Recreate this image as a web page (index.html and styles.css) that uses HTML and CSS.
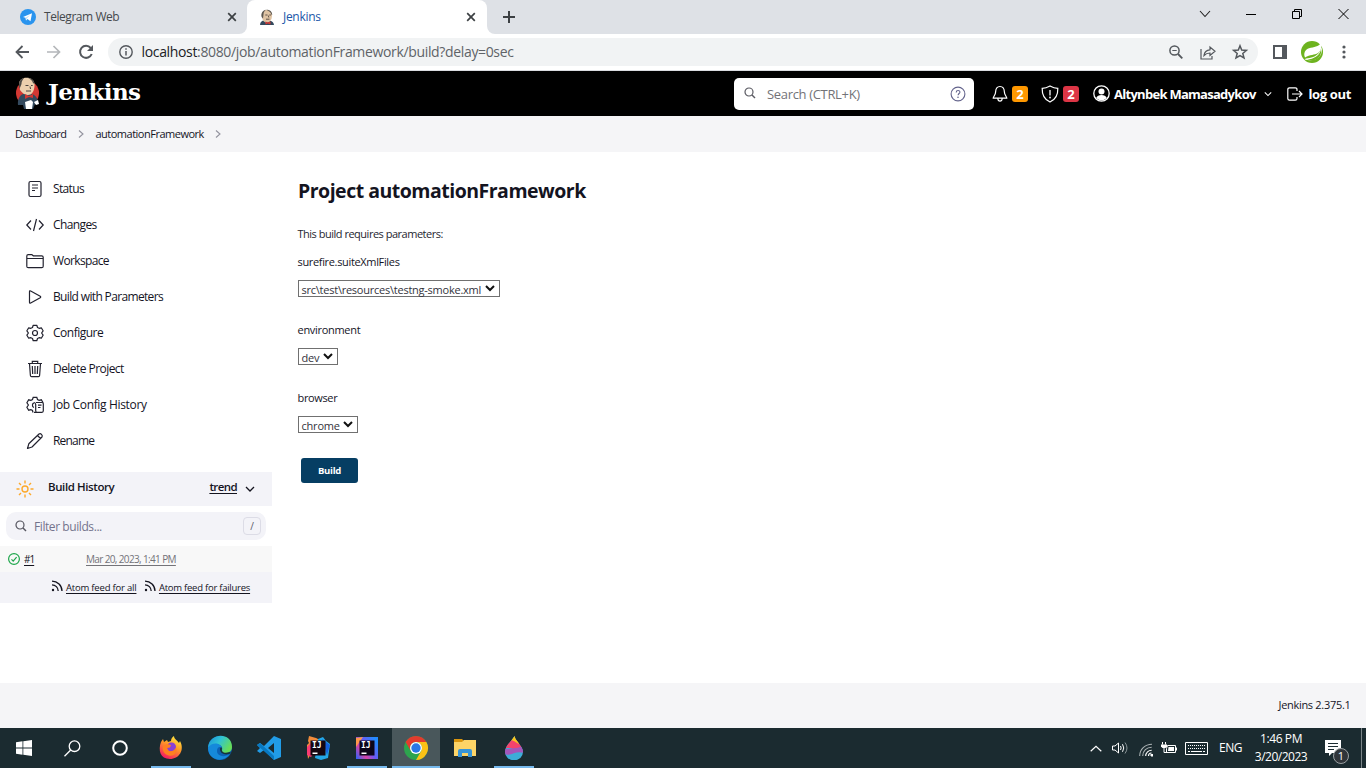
FILE: index.html
```html
<!DOCTYPE html>
<html lang="en">
<head>
<meta charset="utf-8">
<title>Jenkins</title>
<link rel="stylesheet" href="styles.css">
</head>
<body>
<svg class="defs" width="0" height="0">
  <symbol id="jenkins-head" viewBox="0 0 16 16">
    <path d="M1 15.500c0-3 2-4.300 4-4.500l6 .2c2.500.6 3.800 2 4 4.300z" fill="#33495d"/>
    <path d="M4 11 2.600 6C2.400 2.500 5 .4 8 .5s5.300 2 5 6-1.800 6-4 6.500S5 12.400 4 11z" fill="#dfc3a3"/>
    <path d="M2.600 7.500C1.800 3.500 4 .7 7 .3 4.800 2 4.500 3.700 4.500 5L4 9zM7 .3c4-.3 6.200 2 6.200 5.200l-.9-.5C12 3 10 1.500 7 .3z" fill="#5b5752"/>
    <path d="M6.300 5.500h2.200M10.300 5.500h1.700M9.300 6l.5 2M7 9.700h3.500" stroke="#554840" stroke-width=".9" fill="none"/>
    <path d="m6.500 12 2.300 1 2.700-1v3l-2.700-1-2.300 1z" fill="#d33833"/>
  </symbol>
  <symbol id="feed" viewBox="0 0 12 12"><path d="M1 1.200c5.500 0 10 4.300 10 9.800M1 4.800c3.500 0 6.200 2.700 6.200 6.200" fill="none" stroke="#14141f" stroke-width="1.300"/><circle cx="2" cy="10" r="1.200" fill="#14141f"/></symbol>
  <symbol id="chev" viewBox="0 0 10 6"><path d="m1 1 4 4 4-4" fill="none" stroke="currentColor" stroke-width="1.300"/></symbol>
  <symbol id="lens" viewBox="0 0 12 12"><circle cx="5" cy="5" r="4" fill="none" stroke="currentColor" stroke-width="1.200"/><path d="m8 8 3 3" stroke="currentColor" stroke-width="1.400"/></symbol>
  <symbol id="close" viewBox="0 0 10 10"><path d="m1.200 1.200 7.600 7.600m0-7.600L1.200 8.800" stroke="#3c4043" stroke-width="1.700"/></symbol>
</svg>

<header class="tabs">
  <div class="tab">
    <svg width="16" height="16" viewBox="0 0 16 16"><circle cx="8" cy="8" r="8" fill="#2a94ee"/><path d="m3 8 9-3.700-1.500 8-3-2.200L6 11.400l-.5-2.600z" fill="#fff"/><path d="m5.700 8.800 4.300-2.700-3.300 3.300L6 11.400z" fill="#b6dcfa"/></svg>
    <span class="t-telegram">Telegram Web</span>
    <svg class="x" width="10" height="10"><use href="#close"/></svg>
  </div>
  <div class="tab active">
    <svg width="16" height="17"><use href="#jenkins-head"/></svg>
    <span class="t-jenkins">Jenkins</span>
    <svg class="x" width="10" height="10"><use href="#close"/></svg>
  </div>
  <div class="strip">
    <svg width="12" height="12" viewBox="0 0 12 12"><path d="M6 0v12M0 6h12" stroke="#3c4043" stroke-width="2"/></svg>
    <div class="window">
      <svg width="12" height="12" viewBox="0 0 12 12"><path d="m1 3 5 5.500L11 3" fill="none" stroke="#222" stroke-width="1.100"/></svg>
      <svg width="10" height="12" viewBox="0 0 10 12"><path d="M0 6.500h10" stroke="#000"/></svg>
      <svg width="10" height="12" viewBox="0 0 10 12"><path d="M.5 3.500h7v7h-7zM2.500 3.500v-2h7v7h-2" fill="none" stroke="#000"/></svg>
      <svg width="11" height="12" viewBox="0 0 11 12"><path d="m.5 1 10 10m0-10-10 10" stroke="#000"/></svg>
    </div>
  </div>
</header>

<nav class="toolbar">
  <svg width="14" height="14" viewBox="0 0 14 14"><path d="M14 7H1.500M7.500 1l-6 6 6 6" fill="none" stroke="#54585d" stroke-width="1.800"/></svg>
  <svg width="14" height="14" viewBox="0 0 14 14"><path d="M0 7h12.500M6.500 1l6 6-6 6" fill="none" stroke="#b4b7ba" stroke-width="1.700"/></svg>
  <svg width="14" height="14" viewBox="0 0 14 14"><path d="M11.700 3A6 6 0 1 0 12.700 9" fill="none" stroke="#54585d" stroke-width="2"/><path d="M14 0v6H8z" fill="#54585d"/></svg>
  <div class="address">
    <svg width="14" height="14" viewBox="0 0 14 14"><circle cx="7" cy="7" r="6.200" fill="none" stroke="#54585d" stroke-width="1.400"/><path d="M7 6v4.500M7 3.300v1.500" stroke="#54585d" stroke-width="1.500"/></svg>
    <span class="url"><b>localhost</b>:8080/job/automationFramework/build?delay=0sec</span>
    <svg width="14" height="14" viewBox="0 0 14 14"><circle cx="5.500" cy="5.500" r="4.600" fill="none" stroke="#54585d" stroke-width="1.500"/><path d="m9 9 4.300 4.300" stroke="#54585d" stroke-width="1.800"/><path d="M3.300 5.500h4.400" stroke="#54585d"/></svg>
    <svg width="16" height="15" viewBox="0 0 16 15"><path d="M1 4v10h11v-3" fill="none" stroke="#54585d" stroke-width="1.200"/><path d="M4 10.500c.4-3.300 2.300-5.500 6-5.700V2l5 4.300-5 4.200V8c-2.500 0-4.300.7-6 2.500z" fill="none" stroke="#54585d" stroke-width="1.200"/></svg>
    <svg width="16" height="16" viewBox="0 0 16 16"><path d="m8 1.700 1.700 4.300 4.700.4-3.600 3 1.200 4.500L8 11.500l-4 2.400 1.200-4.500-3.600-3L6.300 6z" fill="none" stroke="#54585d" stroke-width="1.500"/></svg>
  </div>
  <svg class="panel" width="14" height="14" viewBox="0 0 14 14"><path d="M0 0h14v14H0zM2 2v10h7V2z" fill="#54585d" fill-rule="evenodd"/></svg>
  <svg class="leaf" width="22" height="22" viewBox="0 0 22 22"><circle cx="11" cy="11" r="11" fill="#6db31f"/><path d="M20 2c1 5-.3 8-3 10-3.500 2.300-8 1.300-13 4.500C2 12 4.500 8.500 8 7.300 13 5.800 17.500 6 20 2z" fill="#fff"/><path d="M20.500 6C19 12 15 17 5 17.400l-1.500 1.200C10 20 16 19 19 15c2-3 2.300-6 1.500-9z" fill="#fff"/><path d="M20 9c-2 6-7 9-14 9.500 6 1.800 10 .5 12.500-3C20 13 20.500 11 20 9z" fill="#6db31f"/></svg>
  <svg class="kebab" width="4" height="14" viewBox="0 0 4 14" fill="#54585d"><circle cx="2" cy="2" r="1.600"/><circle cx="2" cy="7" r="1.600"/><circle cx="2" cy="12" r="1.600"/></svg>
</nav>

<header class="jheader">
  <div class="brand">
    <svg width="25" height="33" viewBox="0 0 25 33"><ellipse cx="12.500" cy="16" rx="11.500" ry="12" fill="#d33833"/><path d="M3 28c-.5-5 1-9 5-11l8-.3c4 1 7 3.500 7 10l-3 .3-2 5H9l-1-4z" fill="#33495d"/><path d="M5 13 4 7C4 3 7 .7 11.500.7S20 3 19.500 9s-3 9-6.500 9c-3 0-6-2-8-5z" fill="#eccfae"/><path d="M4.500 12C3 5 5.500 1.500 9 1 7 3.500 6.500 5 6.500 7zM13 1c4 0 6.500 3 6.400 6L18 6c-1-3-3-4-5-5z" fill="#4c4945"/><path d="M10.500 8.500h3m2.500 0h1.700M15 9.500l.5 2.500M11 14h5" stroke="#4c4541" fill="none"/><path d="m10 17 4 2 4-2v4l-4-1-4 2z" fill="#d33833"/><path d="m10 25 6-2 2 2-1 7h-6zM19 25l4-2 1 4-3 1z" fill="#fff"/></svg>
    <span class="wordmark">Jenkins</span>
  </div>
  <div class="search">
    <svg width="12" height="12"><use href="#lens"/></svg>
    <span class="t-search">Search (CTRL+K)</span>
    <svg width="16" height="16" viewBox="0 0 16 16"><circle cx="8" cy="8" r="6.900" fill="none" stroke="#64648c" stroke-width="1.100"/><path d="M6.200 6.400c0-2.600 3.800-2.400 3.700-.2 0 1.300-1.800 1.400-1.800 3" fill="none" stroke="#64648c" stroke-width="1.100"/><circle cx="8" cy="11.200" r=".8" fill="#64648c"/></svg>
  </div>
  <div class="alerts">
    <svg width="16" height="18" viewBox="0 0 16 18"><path d="M8 1.500C5 1.500 3.700 4 3.600 7c0 3-2.400 4.500-2.400 6.200h13.600c0-1.700-2.400-3.200-2.400-6.200C12.300 4 11 1.500 8 1.500zM5.800 13.500c.3 3.500 4.100 3.500 4.400 0" fill="none" stroke="#fff" stroke-width="1.200"/></svg>
    <span class="badge orange">2</span>
  </div>
  <div class="alerts shield">
    <svg width="18" height="18" viewBox="0 0 18 18"><path d="M9 1Q5 3.400 1.200 3.400C1 9 2.500 14 9 17c6.500-3 8-8 7.800-13.600Q13 3.400 9 1z" fill="none" stroke="#fff" stroke-width="1.200"/><path d="M9 5v5.500" stroke="#fff" stroke-width="1.300"/><circle cx="9" cy="12.500" r=".9" fill="#fff"/></svg>
    <span class="badge red">2</span>
  </div>
  <div class="user">
    <svg width="17" height="17" viewBox="0 0 17 17"><circle cx="8.500" cy="8.500" r="7.700" fill="none" stroke="#fff" stroke-width="1.300"/><circle cx="8.500" cy="6.500" r="3" fill="#fff"/><path d="M3.200 13c1.200-4 9.400-4 10.600 0-3 3.200-7.600 3.200-10.600 0z" fill="#fff"/></svg>
    <span class="t-user">Altynbek Mamasadykov</span>
    <svg width="8" height="6"><use href="#chev"/></svg>
  </div>
  <div class="logout">
    <svg width="16" height="14" viewBox="0 0 16 14"><path d="M10 4V2.500Q10 .8 8.300.8H2.500Q.8.800.8 2.500v9q0 1.700 1.700 1.700h5.800q1.700 0 1.700-1.700V10M5 7h10M12 4l3 3-3 3" fill="none" stroke="#fff" stroke-width="1.200"/></svg>
    <span class="t-logout">log out</span>
  </div>
</header>

<nav class="crumbs">
  <span class="t-dash">Dashboard</span>
  <svg width="6" height="8" viewBox="0 0 6 8"><path d="m1 .5 4 3.500-4 3.500" fill="none" stroke="#92929e" stroke-width="1.100"/></svg>
  <span class="t-auto">automationFramework</span>
  <svg width="6" height="8" viewBox="0 0 6 8"><path d="m1 .5 4 3.500-4 3.500" fill="none" stroke="#92929e" stroke-width="1.100"/></svg>
</nav>

<div class="page">
  <aside class="side">
    <ul class="tasks">
      <li><svg viewBox="0 0 18 18"><rect x="3" y="1.500" width="12" height="15" rx="1.500"/><path d="M6 5h6M6 8h6M6 10.500h3"/></svg><span class="m1">Status</span></li>
      <li><svg viewBox="0 0 18 18"><path d="M5 4.500.8 9 5 13.500M13 4.500 17.200 9 13 13.500M10.500 3l-3 12"/></svg><span class="m2">Changes</span></li>
      <li><svg viewBox="0 0 18 18"><path d="M.8 6.500V4Q.8 2.600 2.200 2.600h3.600l1.500 1.200h8.400q1.500 0 1.500 1.400v9q0 1.500-1.500 1.500H2.300q-1.500 0-1.500-1.500zm0 0h16.400"/></svg><span class="m3">Workspace</span></li>
      <li><svg viewBox="0 0 18 18"><path d="M3.500 3.700v10.600q0 1.300 1.200.7l9.500-5.300q1-.7 0-1.400L4.700 3Q3.500 2.400 3.500 3.700z"/></svg><span class="m4">Build with Parameters</span></li>
      <li><svg viewBox="0 0 18 18"><path d="M7.200 1.300h3.600l.7 2.200 1.600.8 2.200-.5 1.800 3L15.600 9l1.500 2.200-1.800 3-2.200-.5-1.600.8-.7 2.200H7.200l-.7-2.200-1.600-.8-2.200.5-1.800-3L2.400 9 .9 6.800l1.800-3 2.200.5 1.600-.8z" stroke-linejoin="round"/><circle cx="9" cy="9" r="2.500"/></svg><span class="m5">Configure</span></li>
      <li><svg viewBox="0 0 18 18"><path d="M3.500 3.500 4.400 15.500q.1 1.200 1.200 1.200h6.800q1.100 0 1.200-1.200l.9-12M2 3.500h14M6.300 3.300v-2h5.400v2M9 6v8M6.300 6l.4 8M11.700 6l-.4 8"/></svg><span class="m6">Delete Project</span></li>
      <li><svg viewBox="0 0 18 18"><path d="M7 16.500 6.500 14.500l-1.600-.8-2.200.5-1.800-3L2.400 9 .9 6.800l1.800-3 2.200.5 1.600-.8.700-2.200h3.600l.7 2.200 1.600.8 2.200-.5 1.800 3M8 11.500C5.700 11 6 7 8.300 6.800"/><path d="M10 6.500h6q1.300 0 1.300 1.300v7q0 1.500-1.300 1.500h-5q-1.300 0-1.300-1.500V8.500Q9.500 6.500 8 6.500M12 9.200h3.500M12 11.500h2.500M8 16.400h3"/></svg><span class="m7">Job Config History</span></li>
      <li><svg viewBox="0 0 18 18"><path d="m1.500 16.500 1.300-4.700L13 2q1.200-1 2.500.3T16 5L6 15zM11.500 3.500l3 3" stroke-linejoin="round"/></svg><span class="m8">Rename</span></li>
    </ul>
    <section class="history">
      <div class="hist-head">
        <svg width="18" height="18" viewBox="0 0 18 18" fill="none" stroke="#fda92b" stroke-width="1.400"><circle cx="9" cy="9" r="3"/><path d="M9 .5v3M9 14.500v3M.5 9h3M14.500 9h3M3 3l2 2M13 13l2 2M3 15l2-2M13 5l2-2"/></svg>
        <span class="t-bh">Build History</span>
        <a class="t-trend">trend</a>
        <svg width="10" height="6"><use href="#chev"/></svg>
      </div>
      <div class="filter">
        <svg width="12" height="12"><use href="#lens"/></svg>
        <span class="t-filter">Filter builds...</span>
        <kbd>/</kbd>
      </div>
      <div class="build">
        <svg width="12" height="12" viewBox="0 0 12 12" fill="none" stroke="#1ea64b" stroke-width="1.200"><circle cx="6" cy="6" r="5.400"/><path d="m3.500 6.300 1.700 1.800 3.400-4"/></svg>
        <div class="num"><a class="t-num">#1</a></div>
        <a class="t-date">Mar 20, 2023, 1:41 PM</a>
      </div>
      <div class="feeds">
        <svg width="12" height="12"><use href="#feed"/></svg><a class="t-f1">Atom feed for all</a>
        <svg class="second" width="12" height="12"><use href="#feed"/></svg><a class="t-f2">Atom feed for failures</a>
      </div>
    </section>
  </aside>
  <main class="main">
    <h1><span class="t-h1">Project automationFramework</span></h1>
    <p class="lead"><span class="t-lead">This build requires parameters:</span></p>
    <div class="param"><span class="label l1">surefire.suiteXmlFiles</span>
      <div class="select s1"><span class="o1">src\test\resources\testng-smoke.xml</span><svg width="10" height="7" viewBox="0 0 10 7"><path d="m1 1 4 4 4-4" fill="none" stroke="#111" stroke-width="2"/></svg></div></div>
    <div class="param"><span class="label l2">environment</span>
      <div class="select s2"><span class="o2">dev</span><svg width="10" height="7" viewBox="0 0 10 7"><path d="m1 1 4 4 4-4" fill="none" stroke="#111" stroke-width="2"/></svg></div></div>
    <div class="param"><span class="label l3">browser</span>
      <div class="select s3"><span class="o3">chrome</span><svg width="10" height="7" viewBox="0 0 10 7"><path d="m1 1 4 4 4-4" fill="none" stroke="#111" stroke-width="2"/></svg></div></div>
    <button class="go"><span>Build</span></button>
  </main>
</div>

<footer class="foot"><span class="t-ver">Jenkins 2.375.1</span></footer>

<footer class="taskbar">
  <div class="app"><svg width="16" height="16" viewBox="0 0 16 16" fill="#fff"><path d="m0 2.200 6.500-.9v6.300H0zM7.300 1.200 16 0v7.600H7.300zM0 8.400h6.500v6.300L0 13.800zM7.300 8.400H16V16l-8.700-1.200z"/></svg></div>
  <div class="app"><svg width="17" height="17" viewBox="0 0 17 17" fill="none" stroke="#fff" stroke-width="1.300"><circle cx="10.500" cy="6.200" r="5.300"/><path d="M6.700 10 .5 16.200"/></svg></div>
  <div class="app"><svg width="16" height="16" viewBox="0 0 16 16"><circle cx="8" cy="8" r="6.800" fill="none" stroke="#fff" stroke-width="2"/></svg></div>
  <div class="app open"><svg width="24" height="24" viewBox="0 0 24 24"><defs><linearGradient id="ff" x1=".8" y1="0" x2=".3" y2="1"><stop stop-color="#fff044"/><stop offset=".45" stop-color="#ff9727"/><stop offset="1" stop-color="#f61862"/></linearGradient></defs><path d="M2 6 4 3l1 3 3-2 1 2 3-1c0-2 1-4 3-5 0 3 3 4 5 7l1-2c5 9-1 18-10 18C1 23-1 14 2 6z" fill="url(#ff)"/><circle cx="12.500" cy="11" r="4.500" fill="#8a3fd5"/><path d="m4 10 4-2 4 1-1 2.500-3 .5c1 5 7 4 9-.5 2 6-3 9-7 8-5-1-7-5-6-9.500z" fill="#ff8020"/></svg></div>
  <div class="app"><svg width="24" height="24" viewBox="0 0 24 24"><defs><linearGradient id="ed" x1="0" y1="0" x2="1" y2=".5"><stop stop-color="#198ddb"/><stop offset=".5" stop-color="#30c3d4"/><stop offset="1" stop-color="#67de58"/></linearGradient></defs><circle cx="12" cy="12" r="12" fill="#0c61b4"/><path d="M0 12C1-4 24-4 24 11c0 4-3 6-7 6-3 0-4-1-3-3 2-5-7-9-14-2z" fill="url(#ed)"/><path d="M0 12c4-7 13-5 14 0-2-2-5-1-5 3 0 5 7 7 13 3-7 10-22 6-22-6z" fill="#1589db"/><path d="M12 13c0-1 1-2 2-1-1 4 2 6 8 4l1 1c-5 3-11 1-11-4z" fill="#17343b"/></svg></div>
  <div class="app"><svg width="24" height="24" viewBox="0 0 24 24"><path d="m17 0 7 3v18l-7 3L7 14l-4 3-3-2 3-3-3-3 3-2 4 3zm0 7-6 5 6 5z" fill="#219ce7" fill-rule="evenodd"/><path d="m0 9 3-2 14 13v4z" fill="#0879c2"/></svg></div>
  <div class="app"><svg width="24" height="24" viewBox="0 0 24 24"><path d="m3 0 7 2 6 3-8 7-6 11-1-9L1 9l2-2-1-2z" fill="#f28c3c"/><path d="m1 11 7-7 5 6-8 11-4-2z" fill="#fa3b73"/><path d="m12 3 5-2 3 4 4 3-2 14-7 2-6-2z" fill="#23a7e7"/><path d="m16 3 5 16 3-10z" fill="#1560dd"/><path d="M4.500 4.500h15v15h-15z" fill="#150711"/><path d="M6.500 16.500h5v1.500h-5z" fill="#fff"/><text x="6" y="12" class="ij">IJ</text></svg></div>
  <div class="app open"><svg width="24" height="24" viewBox="0 0 24 24"><defs><linearGradient id="ij" x1="0" y1="1" x2="1" y2=".3"><stop stop-color="#2464ff"/><stop offset=".35" stop-color="#d943a5"/><stop offset=".6" stop-color="#6b58f2"/><stop offset="1" stop-color="#238bff"/></linearGradient></defs><path d="M1 1h22v22H1z" fill="url(#ij)"/><path d="m1 2 7-1-7 10z" fill="#ff974b"/><path d="M4.500 4.500h15v15h-15z" fill="#0b061a"/><path d="M6.500 16.500h5v1.500h-5z" fill="#fff"/><text x="6" y="12" class="ij">IJ</text></svg></div>
  <div class="app open current"><svg width="24" height="24" viewBox="0 0 24 24"><circle cx="12" cy="12" r="12" fill="#2da44e"/><path d="M1.600 6A12 12 0 0 1 22.400 6H12a6 6 0 0 0-5.200 9z" fill="#e33b2e"/><path d="M22.400 6A12 12 0 0 1 12 24l5.200-9A6 6 0 0 0 12 6z" fill="#fbc116"/><circle cx="12" cy="12" r="6" fill="#fff"/><circle cx="12" cy="12" r="4.700" fill="#2878e8"/></svg></div>
  <div class="app"><svg width="24" height="24" viewBox="0 0 24 24"><path d="M1 3h8l2 2h12v4H1z" fill="#db960e"/><path d="M1 6h8l2-2h12v16H1z" fill="#fdd467"/><path d="M5 21v-6q0-2 2-2h10q2 0 2 2v6h-4v-4H9v4z" fill="#3895d7"/></svg></div>
  <div class="app open"><svg width="24" height="24" viewBox="0 0 24 24"><defs><clipPath id="drop"><path d="M12.500 0C14 6 21 10 21 16a9 8.500 0 0 1-18 0C3 10 9 6 12.500 0z"/></clipPath></defs><g clip-path="url(#drop)"><path d="M0 0h24v24H0z" fill="#3dadd8"/><path d="M0 11c9 6 11-3 24 0v7C13 13 12 21 0 18z" fill="#a456ba"/><path d="M0 14C7 9 12 16 24 8V4H0z" fill="#f3436c"/><path d="m8 4 5-5 6 9c-5 0-6-4-11-4z" fill="#fbc51c"/></g></svg></div>
  <div class="tray">
    <svg width="12" height="7" viewBox="0 0 12 7"><path d="m.7 6.300 5.300-5 5.300 5" fill="none" stroke="#fff" stroke-width="1.200"/></svg>
    <svg class="vol" width="16" height="14" viewBox="0 0 16 14" fill="none" stroke="#fff"><path d="M.5 5v4H3l3.500 3V2L3 5zM8.500 5q1.300 2 0 4M10.500 3.200q2.500 3.800 0 7.600"/><path d="M13 1.500q4 5.500 0 11" stroke="#8b9699"/></svg>
    <svg class="wifi" width="14" height="14" viewBox="0 0 14 14" fill="none" stroke="#aab1b3" stroke-width="1.100"><path d="M.7 13C.7 6.500 6 1.300 13 1.300M3.700 13c0-5 4-8.800 9-8.800"/><path d="M6.700 13c0-3.500 2.800-5.800 6-5.800M9.500 13c0-1.700 1.300-3 3-3" stroke="#fff"/><path d="M11.500 12h1.500v1.500" stroke="#fff" stroke-width="2"/></svg>
    <svg class="bat" width="16" height="12" viewBox="0 0 16 12"><path d="M6.500 3.500h8v7h-9v-4z" fill="none" stroke="#fff"/><path d="M7.500 5h5.500v4H7z" fill="#fff"/><path d="M15.500 5.500v3M1.500 0v2.500M4.500 0v2.500M3 6v4.500h3" stroke="#fff" fill="none"/><path d="M0 2.500h6v2L4.500 6h-3L0 4.500z" fill="#fff"/></svg>
    <svg class="kb" width="23" height="13" viewBox="0 0 23 13"><path d="M.5.5h22v12H.5z" fill="none" stroke="#fff"/><path d="M3 3.500h17M3 6.500h17" stroke="#fff" stroke-dasharray="1 1"/><path d="M3 9.500h2M6 9.500h11M18 9.500h2" stroke="#fff"/></svg>
    <span class="t-eng">ENG</span>
    <div class="clock"><span class="t-time">1:46 PM</span><span class="t-day">3/20/2023</span></div>
    <div class="notif"><svg width="16" height="17" viewBox="0 0 16 17"><path d="M0 0h16v13H7l-3 3v-3H0z" fill="#fff"/><path d="M3 3.500h10M3 6.500h10M3 9.500h6" stroke="#1d2d32"/></svg><span>1</span></div>
    <i class="peek"></i>
  </div>
</footer>
</body>
</html>
```

FILE: styles.css
```css
* { box-sizing: border-box; }
body { margin: 0; width: 1366px; height: 768px; overflow: hidden; display: flex; flex-direction: column; background: #fff; color: #14141f; font: 12px/16px "Open Sans", "Noto Sans", sans-serif; }
svg { display: block; flex: none; overflow: visible; }
.defs { position: absolute; }
span, a { white-space: nowrap; }
a { text-decoration: underline; text-underline-offset: 2px; }

.tabs { height: 34px; flex: none; display: flex; background: linear-gradient(#dee1e6 0 17px, #fff 17px); color: #45494d; }
.tab { width: 247px; background: #dee1e6; display: flex; align-items: center; padding: 0 10px 0 20px; gap: 8px; border-bottom-right-radius: 8px; }
.tab .x { margin-left: auto; }
.tab.active { width: 240px; background: #fff; border-radius: 8px 8px 0 0; padding: 0 11px 0 12px; }
.t-telegram { letter-spacing: -.45px; }
.t-jenkins { color: #1a56a8; letter-spacing: -.3px; }
.strip { flex: 1; background: #dee1e6; border-bottom-left-radius: 8px; display: flex; align-items: center; padding: 0 17px 0 16px; }
.window { margin-left: auto; display: flex; gap: 36px; padding-bottom: 6px; }
.window svg:first-child { margin-right: -1px; }

.toolbar { height: 37px; flex: none; display: flex; align-items: center; padding: 0 20px 0 15px; border-bottom: 1px solid #dadce0; }
.toolbar > svg + svg { margin-left: 18px; }
.address { flex: none; margin-left: 15px; width: 1150px; height: 28px; border-radius: 14px; background: #f1f3f4; display: flex; align-items: center; padding: 0 10px 0 11px; gap: 16.500px; }
.url { flex: 1; margin-left: -8px; font-size: 14px; color: #5f6368; letter-spacing: -.345px; }
.url b { font-weight: 400; color: #202124; }
.toolbar .panel { margin-left: 15px; }
.toolbar .leaf { margin-left: 14px; }
.toolbar .kebab { margin-left: 19px; }

.jheader { height: 45px; flex: none; background: #000; color: #fff; display: flex; align-items: center; padding: 0 15px; font-size: 13px; font-weight: 700; }
.brand { flex: none; display: flex; align-items: center; gap: 8px; width: 719px; }
.wordmark { font: 700 23px/26px "DejaVu Serif", serif; padding-bottom: 3px; letter-spacing: -.6px; }
.search { flex: none; width: 240px; height: 32px; border-radius: 5px; background: #fff; color: #5a5a62; display: flex; align-items: center; padding: 0 8px 0 10px; gap: 11px; font-weight: 400; }
.search > svg:first-child { margin-bottom: 1px; }
.t-search { flex: 1; color: #737378; letter-spacing: -.33px; }
.alerts { display: flex; align-items: center; gap: 4px; margin-left: 18px; }
.shield { margin-left: 13px; gap: 4px; }
.badge { width: 16px; height: 16px; border-radius: 3px; text-align: center; font-size: 13px; line-height: 16px; }
.orange { background: #ff9800; }
.red { background: #dc3545; }
.user { display: flex; align-items: center; gap: 4px; margin-left: 14px; }
.t-user { letter-spacing: -.72px; }
.user > svg:last-child { margin-left: 4px; }
.logout { display: flex; align-items: center; gap: 5px; margin-left: auto; }
.t-logout { letter-spacing: -.35px; }

.crumbs { height: 36px; flex: none; background: #f5f5f7; display: flex; align-items: center; padding-left: 15px; gap: 11.500px; font-size: 11px; }
.t-dash { letter-spacing: -.6px; }
.t-auto { letter-spacing: -.49px; }

.page { flex: 1; display: flex; min-height: 0; }
.side { width: 272px; }
.tasks { list-style: none; margin: 0; padding: 19px 0 13px 26px; }
.tasks li { height: 36px; display: flex; align-items: center; gap: 9px; }
.tasks svg { width: 18px; height: 18px; fill: none; stroke: #22222f; stroke-width: 1.2; }
.m1 { letter-spacing: -.65px; } .m2 { letter-spacing: -.6px; } .m3 { letter-spacing: -.65px; } .m4 { letter-spacing: -.65px; }
.m5 { letter-spacing: -.5px; } .m6 { letter-spacing: -.55px; } .m7 { letter-spacing: -.34px; } .m8 { letter-spacing: -.8px; }
.hist-head { height: 34px; background: #f3f3f8; display: flex; align-items: center; padding: 0 17px 0 16px; font-weight: 600; font-size: 11.500px; }
.t-bh { margin-left: 14px; padding-bottom: 4px; letter-spacing: -.4px; }
.t-trend { margin-left: auto; margin-right: 8px; padding-bottom: 4px; letter-spacing: -.6px; }
.filter { height: 28px; margin: 6px 6px 6px; border-radius: 10px; background: #f3f3f8; display: flex; align-items: center; padding: 0 5px 0 9px; gap: 7px; color: #55555f; }
.t-filter { flex: 1; color: #73738c; padding-top: 2px; font-weight: 500; letter-spacing: -.42px; }
kbd { width: 18px; height: 18px; border: 1px solid #dcdce6; border-radius: 4px; text-align: center; font: 10px/16px "Open Sans", sans-serif; color: #5a5a68; }
.build { height: 26px; background: #f8f8f8; display: flex; align-items: center; padding-left: 8px; gap: 4px; font-size: 10px; }
.num { width: 58px; }
.t-num { letter-spacing: -1px; }
.t-date { color: #737378; letter-spacing: -.64px; }
.feeds { height: 31px; background: #f3f3f8; display: flex; align-items: center; padding-left: 51px; gap: 3px; font-size: 9.500px; }
.t-f1 { letter-spacing: -.2px; } .t-f2 { letter-spacing: -.25px; }
.feeds svg { margin-bottom: 4px; }
.feeds .second { margin-left: 4.500px; }

.main { padding: 24px 0 0 26px; font-size: 11px; display: flex; flex-direction: column; align-items: flex-start; }
h1 { margin: 0; font-size: 19.500px; line-height: 30px; font-weight: 700; letter-spacing: -.5px; }
.lead { margin: 20px 0 12px; color: #262630; letter-spacing: -.49px; }
.label, .lead { margin-left: -.5px; }
.l1 { letter-spacing: -.34px; } .l2 { letter-spacing: -.3px; } .l3 { letter-spacing: -.35px; }
.param { height: 68px; display: flex; flex-direction: column; align-items: flex-start; }
.select { margin-top: 10px; height: 17px; border: 1px solid #707070; display: flex; align-items: center; justify-content: space-between; padding: 0 4px 0 3px; line-height: 15px; color: #33333c; }
.select span { padding-top: 1px; margin-left: -.5px; }
.o1 { letter-spacing: -.24px; } .o2, .o3 { letter-spacing: -.2px; }
.s1 { width: 202px; } .s2 { width: 40px; } .s3 { width: 60px; }
.go { margin: 0 0 0 3px; width: 57px; height: 25px; border: 0; border-radius: 3px; background: #063e63; color: #fff; font: 700 9.500px/16px "Open Sans", sans-serif; letter-spacing: -.25px; padding: 0; }

.foot { height: 45px; flex: none; background: #f5f5f7; display: flex; align-items: center; justify-content: flex-end; padding: 0 15.500px 2px 0; font-size: 11px; letter-spacing: -.3px; }

.taskbar { height: 40px; flex: none; display: flex; background: #1b2b30; color: #fff; }
.app { width: 48px; height: 40px; display: flex; align-items: center; justify-content: center; }
.app + .app { margin-left: 1px; }
.app:nth-child(2), .app:nth-child(3) { margin-left: 0; }
.app:nth-child(4) { margin-left: 3px; }
.app.open { background: linear-gradient(#76b9ed, #76b9ed) center bottom / 40px 2px no-repeat; }
.app.current { background: linear-gradient(#76b9ed, #76b9ed) bottom / 100% 2px no-repeat #49575b; }
.ij { font: 700 8px "DejaVu Sans Mono", monospace; fill: #fff; }
.tray { margin-left: auto; display: flex; align-items: center; }
.vol { margin-left: 10px; } .wifi { margin-left: 11px; margin-top: 3px; } .bat { margin-left: 8px; } .kb { margin-left: 8px; }
.t-eng { margin-left: 11px; letter-spacing: -.5px; }
.clock { width: 76px; margin-left: 1px; display: flex; flex-direction: column; align-items: center; line-height: 18px; }
.t-time { letter-spacing: -.4px; }
.t-day { letter-spacing: -.5px; }
.notif { position: relative; margin-left: 6px; width: 36px; height: 17px; }
.notif span { position: absolute; left: 8px; top: 8px; width: 16px; height: 16px; border: 1px solid #9ba1a3; border-radius: 50%; background: #30353a; font-size: 11px; line-height: 14px; text-align: center; }
.peek { width: 5px; height: 40px; border-left: 1px solid #7b8588; }
```
